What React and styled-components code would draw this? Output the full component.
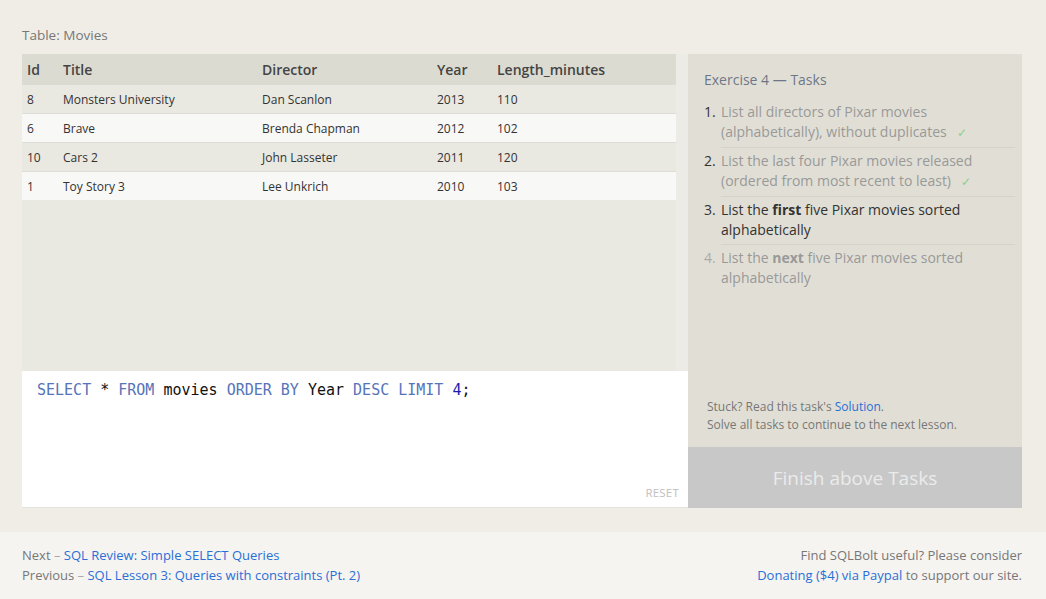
import React from 'react';
import styled, { createGlobalStyle } from 'styled-components';

const GlobalStyle = createGlobalStyle`
  html, body {
    margin: 0;
    padding: 0;
    background: #efede6;
  }
  body {
    font-family: "Open Sans", "Liberation Sans", sans-serif;
    color: #444;
  }
`;

const movies = [
  { id: 8, title: 'Monsters University', director: 'Dan Scanlon', year: 2013, length: 110 },
  { id: 6, title: 'Brave', director: 'Brenda Chapman', year: 2012, length: 102 },
  { id: 10, title: 'Cars 2', director: 'John Lasseter', year: 2011, length: 120 },
  { id: 1, title: 'Toy Story 3', director: 'Lee Unkrich', year: 2010, length: 103 },
];

// main area
const Main = styled.div`
  background: #efede6;
  padding: 26px 24px 24px 22px;
`;

const TableLabel = styled.div`
  font-size: 13.5px;
  line-height: 18px;
  color: #777;
  margin-bottom: 10px;
`;

const Workspace = styled.div`
  display: grid;
  grid-template-columns: 666px 334px;
  grid-template-rows: 393px 61px;
`;

const LeftColumn = styled.div`
  grid-row: 1 / 3;
  display: flex;
  flex-direction: column;
`;

const TableBox = styled.div`
  height: 317px;
  display: flex;
  background: #e9e8e1;
`;

const TableScroll = styled.div`
  width: 654px;
`;

const ScrollTrack = styled.div`
  width: 12px;
  background: #ecebe6;
`;

const Table = styled.table`
  width: 100%;
  border-collapse: collapse;
  font-size: 12px;
`;

const Th = styled.th`
  text-align: left;
  font-weight: 600;
  font-size: 14px;
  color: #444;
  background: #dcdbd1;
  height: 31px;
  padding: 0 0 0 5px;
  width: ${p => p.$w || 'auto'};
`;

const Row = styled.tr`
  background: ${p => (p.$even ? '#f8f8f7' : '#e9e8e1')};
  border-top: 1px solid #dddcd6;
  &:first-child { border-top: none; }
`;

const Td = styled.td`
  height: 28px;
  padding: 0 0 0 5px;
  color: #333;
`;

const Editor = styled.div`
  height: 137px;
  background: #fff;
  position: relative;
  border-bottom: 1px solid #e4e3dc;
  box-sizing: border-box;
  padding: 9px 15px;
  font-family: "DejaVu Sans Mono", monospace;
  font-size: 15px;
  line-height: 20px;
  color: #111;
`;

const Kw = styled.span`
  color: ${p => (p.$num ? '#1c1cb0' : '#5674b9')};
`;

const Reset = styled.div`
  position: absolute;
  right: 9px;
  bottom: 6px;
  font-family: "Open Sans", sans-serif;
  font-size: 11.5px;
  line-height: 16px;
  color: #c0c0c0;
  letter-spacing: 0.2px;
`;

const TasksPanel = styled.div`
  background: #e1dfd5;
  padding: 16px 7px 0 16px;
  display: flex;
  flex-direction: column;
`;

const TasksTitle = styled.div`
  font-size: 14px;
  line-height: 20px;
  color: #6e7788;
  margin-bottom: 9px;
`;

const TaskList = styled.ol`
  list-style: none;
  margin: 0;
  padding: 0;
`;

const Task = styled.li`
  font-size: 14px;
  line-height: 20px;
  padding: 3px 0 4px;
  border-bottom: ${p => (p.$last ? 'none' : '1px solid #d6d4ca')};
  margin-left: 17px;
  position: relative;
  color: ${p => (p.$state === 'current' ? '#333' : '#999')};
`;

const TaskNum = styled.span`
  position: absolute;
  left: -17px;
  color: ${p => (p.$state === 'future' ? '#aaa' : '#333')};
`;

const Check = styled.span`
  color: #8bd08b;
  font-size: 12px;
  margin-left: 10px;
`;

const Strong = styled.b`
  font-weight: 700;
`;

const Stuck = styled.div`
  margin-top: auto;
  padding: 0 0 13px 3px;
  font-size: 12px;
  line-height: 18px;
  color: #777;
`;

const Link = styled.a`
  color: #2a6fd6;
  text-decoration: none;
`;

const FinishButton = styled.div`
  background: #c8c8c8;
  color: #ebebeb;
  font-size: 19px;
  display: flex;
  align-items: center;
  justify-content: center;
`;

const Footer = styled.div`
  background: #f5f4f1;
  height: 67px;
  box-sizing: border-box;
  padding: 13px 24px 0 22px;
  display: flex;
  justify-content: space-between;
  font-size: 13px;
  line-height: 20px;
  color: #777;
`;

const FooterRight = styled.div`
  text-align: right;
`;

const Dash = styled.span`
  color: #aaa;
`;

const App = () => {
  return (
    <>
      <GlobalStyle />
      <Main>
        <TableLabel>Table: Movies</TableLabel>
        <Workspace>
          <LeftColumn>
            <TableBox>
              <TableScroll>
                <Table>
                  <thead>
                    <tr>
                      <Th $w="31px">Id</Th>
                      <Th $w="194px">Title</Th>
                      <Th $w="170px">Director</Th>
                      <Th $w="55px">Year</Th>
                      <Th>Length_minutes</Th>
                    </tr>
                  </thead>
                  <tbody>
                    {movies.map((m, i) => (
                      <Row key={m.id} $even={i % 2 === 1}>
                        <Td>{m.id}</Td>
                        <Td>{m.title}</Td>
                        <Td>{m.director}</Td>
                        <Td>{m.year}</Td>
                        <Td>{m.length}</Td>
                      </Row>
                    ))}
                  </tbody>
                </Table>
              </TableScroll>
              <ScrollTrack />
            </TableBox>
            <Editor>
              <Kw>SELECT</Kw> * <Kw>FROM</Kw> movies <Kw>ORDER BY</Kw> Year <Kw>DESC</Kw> <Kw>LIMIT</Kw> <Kw $num>4</Kw>;
              <Reset>RESET</Reset>
            </Editor>
          </LeftColumn>

          <TasksPanel>
            <TasksTitle>Exercise 4 — Tasks</TasksTitle>
            <TaskList>
              <Task $state="done">
                <TaskNum $state="done">1.</TaskNum>
                List all directors of Pixar movies (alphabetically), without duplicates<Check>✓</Check>
              </Task>
              <Task $state="done">
                <TaskNum $state="done">2.</TaskNum>
                List the last four Pixar movies released (ordered from most recent to least)<Check>✓</Check>
              </Task>
              <Task $state="current">
                <TaskNum $state="current">3.</TaskNum>
                List the <Strong>first</Strong> five Pixar movies sorted alphabetically
              </Task>
              <Task $state="future" $last>
                <TaskNum $state="future">4.</TaskNum>
                List the <Strong>next</Strong> five Pixar movies sorted alphabetically
              </Task>
            </TaskList>
            <Stuck>
              Stuck? Read this task's <Link href="#">Solution</Link>.<br />
              Solve all tasks to continue to the next lesson.
            </Stuck>
          </TasksPanel>
          <FinishButton>Finish above Tasks</FinishButton>
        </Workspace>
      </Main>
      <Footer>
        <div>
          Next <Dash>–</Dash> <Link href="#">SQL Review: Simple SELECT Queries</Link><br />
          Previous <Dash>–</Dash> <Link href="#">SQL Lesson 3: Queries with constraints (Pt. 2)</Link>
        </div>
        <FooterRight>
          Find SQLBolt useful? Please consider<br />
          <Link href="#">Donating ($4) via Paypal</Link> to support our site.
        </FooterRight>
      </Footer>
    </>
  );
};

export default App;
